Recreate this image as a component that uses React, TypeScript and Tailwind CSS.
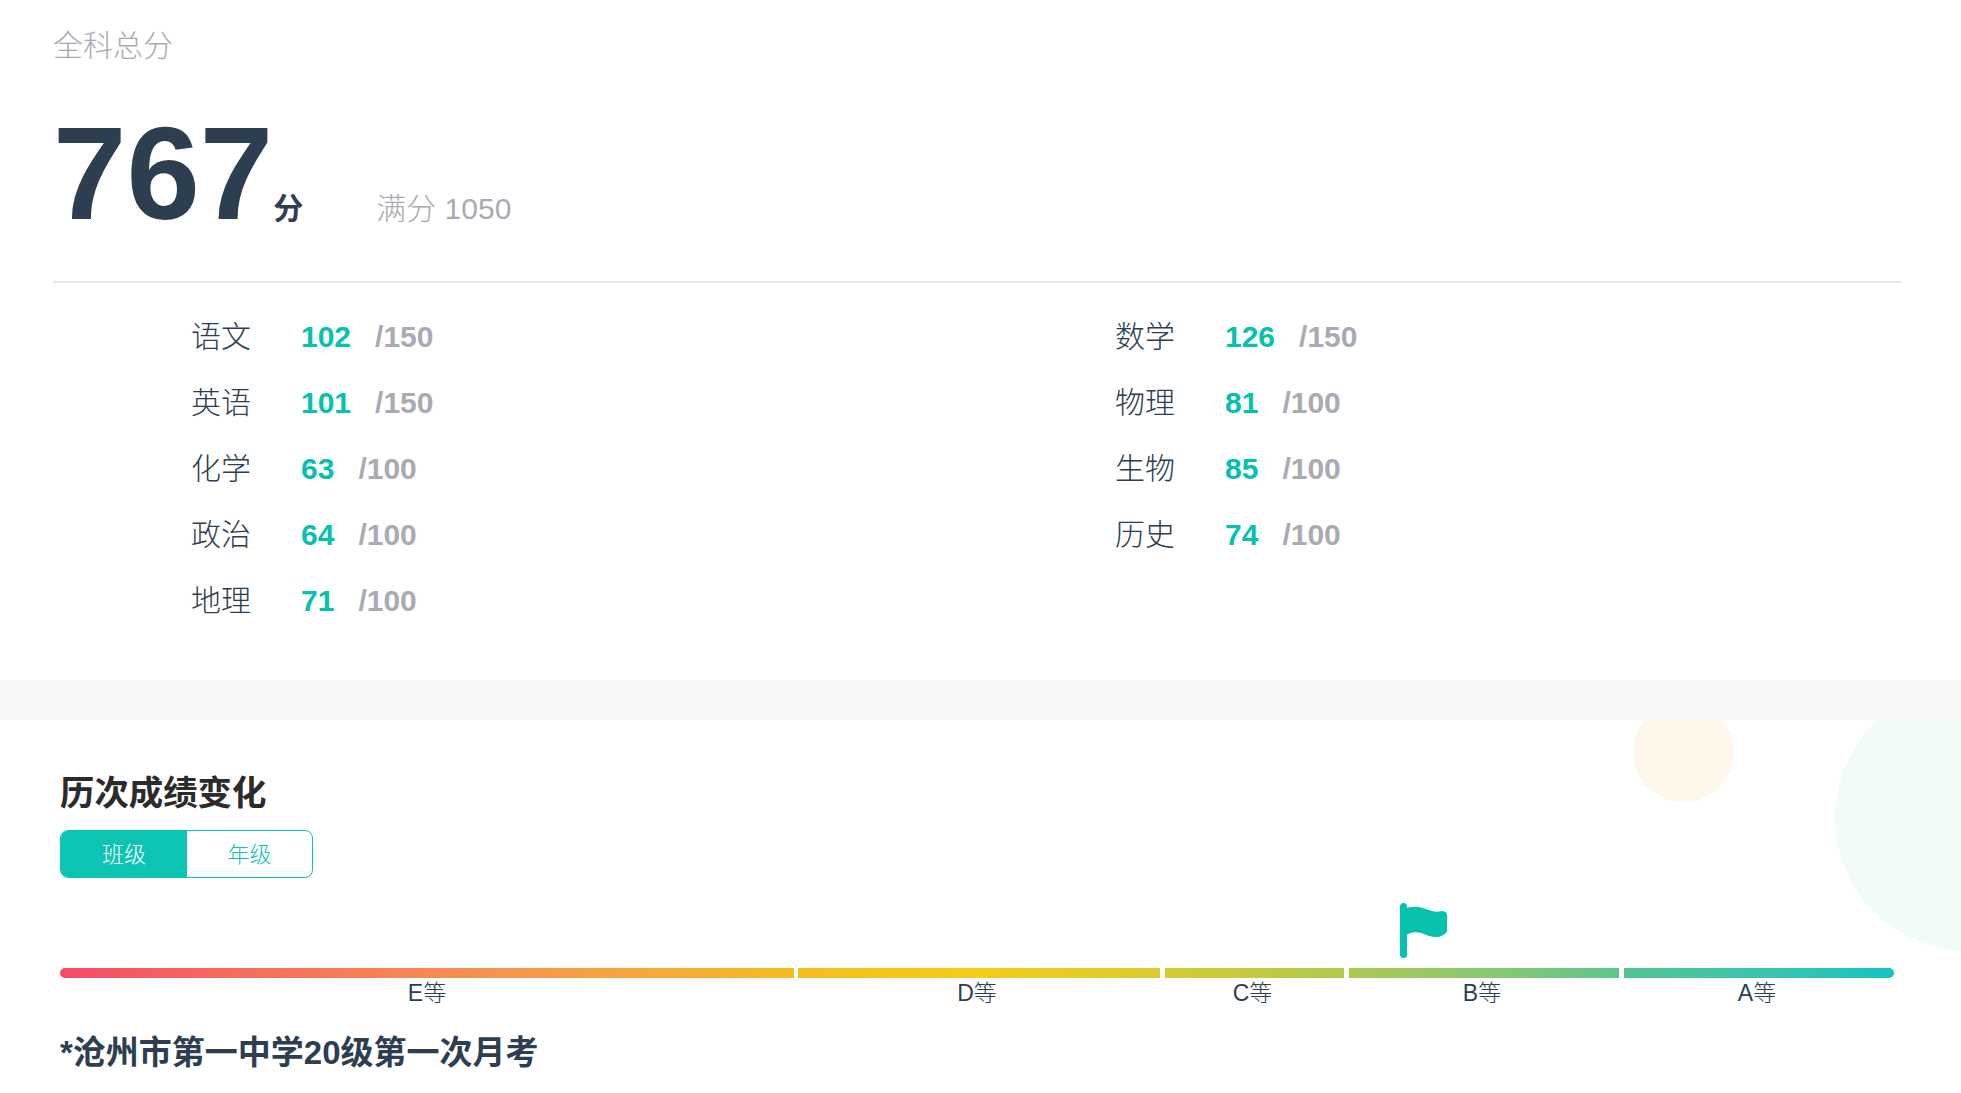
const font = "font-['Liberation_Sans','Noto_Sans_CJK_SC',sans-serif]";

const leftScores = [
  { name: '语文', score: 102, full: 150 },
  { name: '英语', score: 101, full: 150 },
  { name: '化学', score: 63, full: 100 },
  { name: '政治', score: 64, full: 100 },
  { name: '地理', score: 71, full: 100 },
];

const rightScores = [
  { name: '数学', score: 126, full: 150 },
  { name: '物理', score: 81, full: 100 },
  { name: '生物', score: 85, full: 100 },
  { name: '历史', score: 74, full: 100 },
];

function ScoreRow({ name, score, full }: { name: string; score: number; full: number }) {
  return (
    <div className="flex h-[66px] items-center text-[30px]">
      <span className="w-[110px] font-light text-[#2d3e50]">{name}</span>
      <span className="mr-[24px] font-bold text-[#06c1ae]">{score}</span>
      <span className="font-bold text-[#a9abb3]">/{full}</span>
    </div>
  );
}

function Flag() {
  return (
    <svg viewBox="0 0 47 55" className="absolute left-[1400px] top-[903px] h-[55px] w-[47px]" fill="#06c1ae">
      <rect x="0" y="0" width="7" height="55" rx="3.5" />
      <path d="M5 6C9 4 15 3 21 4.5C27 6 33 9.5 39 8.5C42 8 47 7.5 47 12V27C47 30 44 32 40 33.500C34 35.500 27 32 21 30C15 28.500 10 29.500 5 33Z" />
    </svg>
  );
}

const grades = [
  { label: 'E等', width: 'w-[734px] -mr-[1px]', bar: 'rounded-l-full bg-gradient-to-r from-[#f34b66] to-[#f6bb1f]', text: '' },
  { label: 'D等', width: 'w-[362px]', bar: 'bg-gradient-to-r from-[#f6bd1d] via-[#f5cc18] to-[#d9cb2e]', text: 'pr-[4px]' },
  { label: 'C等', width: 'w-[179px]', bar: 'bg-gradient-to-r from-[#d4cb33] to-[#afc94d]', text: 'pr-[4px]' },
  { label: 'B等', width: 'w-[270px]', bar: 'bg-gradient-to-r from-[#acc950] to-[#5cc68c]', text: 'pr-[4px]' },
  { label: 'A等', width: 'w-[270px]', bar: 'rounded-r-full bg-gradient-to-r from-[#52c592] to-[#10c3c3]', text: 'pr-[4px]' },
];

export default function App() {
  return (
    <div className={`relative h-[1093px] overflow-hidden bg-white ${font}`}>
      <section className="h-[680px] pt-[28px] pr-[60px] pl-[53px]">
        <div className="text-[30px] leading-[36px] font-light text-[#a9abb3]">全科总分</div>
        <div className="mt-[44px] flex h-[175px] items-baseline border-b-2 border-[#e8e8e8]">
          <span className="text-[132px] leading-[132px] font-bold text-[#2d3e50]">767</span>
          <span className="text-[30px] font-bold text-[#2d3e50]">分</span>
          <span className="ml-[73px] text-[30px] font-light text-[#a9abb3]">满分 1050</span>
        </div>
        <div className="mt-[20px] flex pl-[138px]">
          <div className="w-[924px]">
            {leftScores.map((s) => (
              <ScoreRow key={s.name} {...s} />
            ))}
          </div>
          <div>
            {rightScores.map((s) => (
              <ScoreRow key={s.name} {...s} />
            ))}
          </div>
        </div>
      </section>

      <div className="relative z-10 h-[40px] bg-[#f8f8f8]" />

      <section className="px-[60px] pt-[51px]">
        <h2 className="text-[34.4px] leading-[44px] font-bold text-[#2b2b2b]">历次成绩变化</h2>
        <div className="mt-[15px] flex h-[48px] w-[253px] overflow-hidden rounded-lg border border-[#0cc4b4] text-[22px]">
          <div className="flex w-[126px] items-center justify-center bg-[#0cc4b4] font-light text-white">班级</div>
          <div className="flex flex-1 items-center justify-center font-light text-[#0cc4b4]">年级</div>
        </div>
        <div className="mt-[90px] flex gap-[5px]">
          {grades.map((g) => (
            <div key={g.label} className={g.width}>
              <div className={`h-[10px] ${g.bar}`} />
              <div className={`text-center text-[23px] leading-[30px] font-light text-[#2d3e50] ${g.text}`}>{g.label}</div>
            </div>
          ))}
        </div>
        <div className="mt-[23px] text-[33px] leading-[44px] font-bold text-[#2d3e50]">*沧州市第一中学20级第一次月考</div>
      </section>

      <div className="absolute left-[1633px] top-[702px] h-[100px] w-[100px] rounded-full bg-[#fff7ea]" />
      <div className="absolute left-[1835px] top-[685px] h-[266px] w-[266px] rounded-full bg-[#f1fbfa]" />
      <Flag />
    </div>
  );
}
